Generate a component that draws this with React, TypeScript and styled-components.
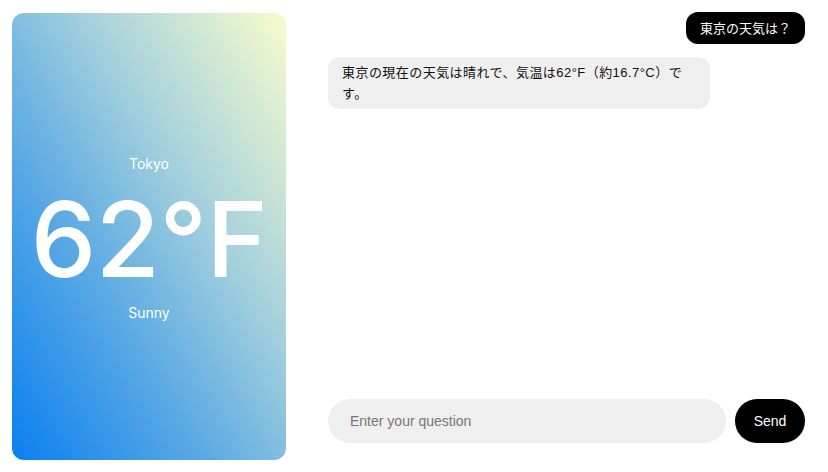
import React from 'react';
import styled, { createGlobalStyle } from 'styled-components';

const GlobalStyle = createGlobalStyle`
  html, body {
    margin: 0;
    padding: 0;
    background: #ffffff;
  }
  body {
    font-family: "Liberation Sans", "Noto Sans CJK JP", sans-serif;
    color: #111;
  }
`;

const messages = [
  { role: 'user', text: '東京の天気は？' },
  { role: 'assistant', text: '東京の現在の天気は晴れで、気温は62°F（約16.7°C）です。' },
];

export default function App() {
  return (
    <>
      <GlobalStyle />
      <Page>
        <WeatherCard>
          <City>Tokyo</City>
          <Temp>62°F</Temp>
          <Condition>Sunny</Condition>
        </WeatherCard>
        <Chat>
          <MessageList>
            {messages.map((m, i) => (
              <Bubble key={i} $user={m.role === 'user'}>
                {m.text}
              </Bubble>
            ))}
          </MessageList>
          <InputRow>
            <Input placeholder="Enter your question" />
            <SendButton>Send</SendButton>
          </InputRow>
        </Chat>
      </Page>
    </>
  );
}

const Page = styled.div`
  display: flex;
  gap: 42px;
  height: 472px;
  box-sizing: border-box;
  padding: 13px 23px 12px 12px;
`;

const WeatherCard = styled.div`
  width: 274px;
  flex-shrink: 0;
  border-radius: 12px;
  background: linear-gradient(to top right, #0a7ff0 0%, #5aa9e4 35%, #a9d3dc 65%, #f8fccb 100%);
  color: #fff;
  font-family: Inter, "Liberation Sans", sans-serif;
  display: flex;
  flex-direction: column;
  align-items: center;
  justify-content: center;
`;

const City = styled.div`
  font-size: 14px;
  margin-top: 2px;
`;

const Temp = styled.div`
  font-size: 104px;
  font-weight: 500;
  line-height: 1;
  margin: 15px 0 13px;
  letter-spacing: -0.5px;
`;

const Condition = styled.div`
  font-size: 14px;
`;

const Chat = styled.div`
  flex: 1;
  display: flex;
  flex-direction: column;
  justify-content: space-between;
  padding-bottom: 17px;
`;

const MessageList = styled.div`
  display: flex;
  flex-direction: column;
  gap: 13px;
  margin-top: -1px;
`;

const Bubble = styled.div<{ $user?: boolean }>`
  align-self: ${(p) => (p.$user ? 'flex-end' : 'flex-start')};
  box-sizing: border-box;
  width: ${(p) => (p.$user ? 'auto' : '80%')};
  padding: ${(p) => (p.$user ? '5.5px 14px' : '5px 14px')};
  border-radius: 12px;
  font-size: 13px;
  line-height: 21px;
  letter-spacing: ${(p) => (p.$user ? '0' : '0.45px')};
  background: ${(p) => (p.$user ? '#000' : '#efefef')};
  color: ${(p) => (p.$user ? '#fff' : '#111')};
`;

const InputRow = styled.div`
  display: flex;
  gap: 9px;
`;

const Input = styled.input`
  flex: 1;
  height: 44px;
  border: none;
  outline: none;
  border-radius: 22px;
  background: #efefef;
  padding: 0 22px;
  font-size: 14px;
  font-family: "Liberation Sans", sans-serif;
  &::placeholder {
    color: #777;
  }
`;

const SendButton = styled.button`
  width: 70px;
  height: 44px;
  border: none;
  border-radius: 22px;
  background: #000;
  color: #fff;
  font-size: 14px;
  font-family: "Liberation Sans", sans-serif;
  cursor: pointer;
`;
